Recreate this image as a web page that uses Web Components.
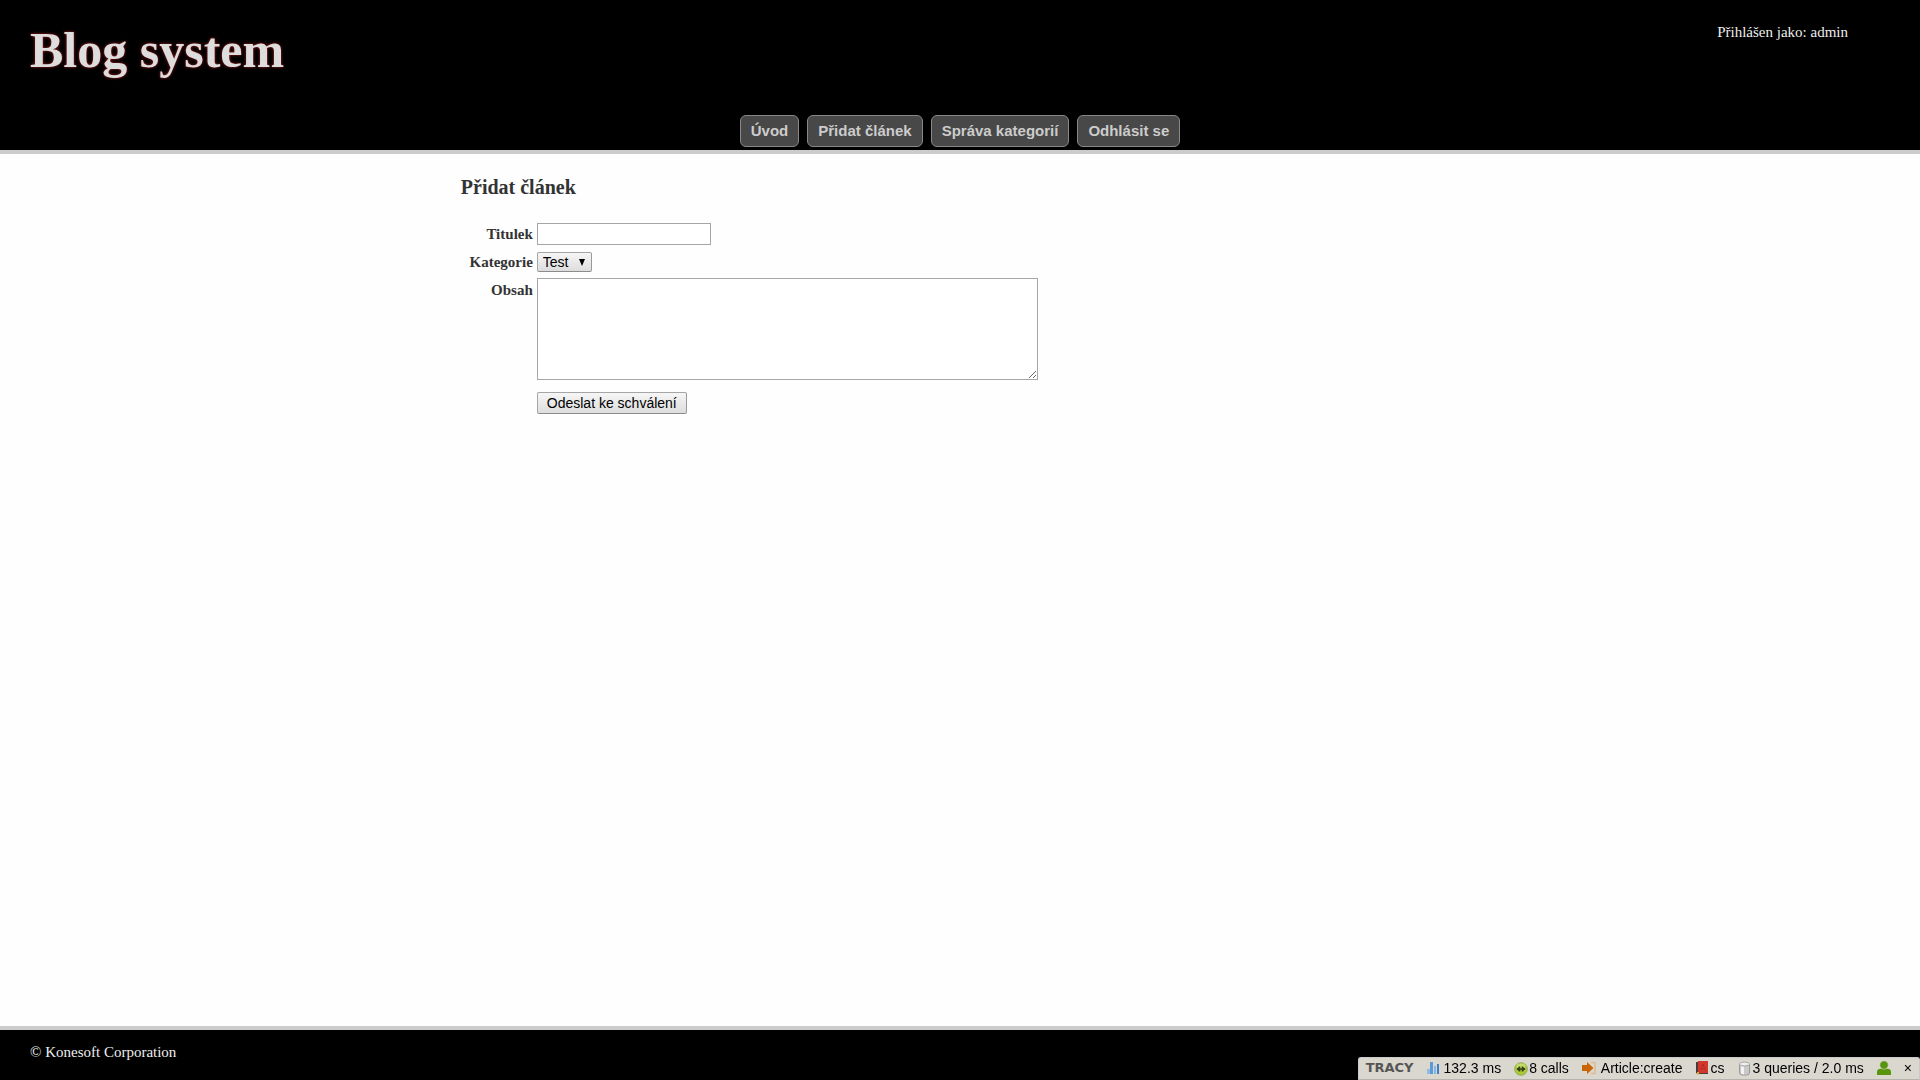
<!DOCTYPE html>
<html lang="cs">
<head>
<meta charset="utf-8">
<title>Blog system</title>
<style>
    body {
        background-color: #fefefe;
        color: #333;
        font-family: "Liberation Serif", "Times New Roman", serif;
        font-size: 15px;
        margin: 0;
    }
</style>
</head>
<body>
<blog-app></blog-app>

<script>
function createTemplate(html) {
    const template = document.createElement('template');
    template.innerHTML = html;
    return template;
}

class BaseElement extends HTMLElement {
    constructor() {
        super();
        this._shadowRoot = this.attachShadow({ mode: 'open' });
        this._shadowRoot.appendChild(this.constructor.template.content.cloneNode(true));
    }
}

class NavLink extends BaseElement {
    connectedCallback() {
        this._shadowRoot.querySelector('a').href = this.getAttribute('href') || '#';
    }
}

NavLink.template = createTemplate(`
<style>
    :host {
        display: block;
    }

    a {
        background-color: #484848;
        border: 1px solid #888;
        border-radius: 6px;
        color: #ccc;
        display: block;
        font: bold 15px/20px "Liberation Sans", Arial, sans-serif;
        padding: 5px 10px;
        text-decoration: none;
    }

    a:hover {
        background-color: #666;
    }
</style>

<a><slot></slot></a>
`);

class BlogHeader extends BaseElement {}

BlogHeader.template = createTemplate(`
<style>
    :host {
        background-color: #000;
        border-bottom: 4px solid #ccc;
        color: #eee;
        display: flex;
        flex-direction: column;
        justify-content: space-between;
        min-height: 150px;
    }

    .top {
        align-items: flex-start;
        display: flex;
        justify-content: space-between;
        padding: 22px 72px 0 30px;
    }

    h1 {
        color: #ddd;
        font-size: 50px;
        line-height: 56px;
        margin: 0;
        text-shadow: 0 0 3px #b22;
    }

    .user {
        line-height: 20px;
    }

    nav {
        display: flex;
        gap: 8px;
        justify-content: center;
        padding-bottom: 3px;
    }
</style>

<div class="top">
    <h1><slot name="title"></slot></h1>
    <div class="user"><slot name="user"></slot></div>
</div>
<nav><slot></slot></nav>
`);

class FormRow extends BaseElement {}

FormRow.template = createTemplate(`
<style>
    :host {
        column-gap: 4px;
        display: grid;
        grid-template-columns: 72px 1fr;
        min-height: 24px;
    }

    .label {
        font-weight: bold;
        line-height: 24px;
        text-align: right;
    }

    .control {
        align-items: center;
        display: flex;
    }
</style>

<div class="label"><slot name="label"></slot></div>
<div class="control"><slot></slot></div>
`);

class ArticleForm extends BaseElement {
    constructor() {
        super();
        this.$form = this._shadowRoot.querySelector('form');
        this.$form.addEventListener('submit', this._onSubmit.bind(this));
    }

    _onSubmit(e) {
        e.preventDefault();
        this.dispatchEvent(new CustomEvent('onCreate', {
            detail: Object.fromEntries(new FormData(this.$form)),
        }));
    }
}

ArticleForm.template = createTemplate(`
<style>
    :host {
        display: block;
    }

    form {
        display: flex;
        flex-direction: column;
        gap: 4px;
    }

    input, select, textarea, button {
        border: 1px solid #a6a6a6;
        box-sizing: border-box;
        color: #000;
        font: 14px/16px "Liberation Sans", Arial, sans-serif;
        margin: 0;
    }

    input, textarea {
        background-color: #fff;
        padding: 2px;
    }

    input {
        height: 22px;
        width: 174px;
    }

    textarea {
        height: 102px;
        resize: both;
        width: 501px;
    }

    select, button {
        background: linear-gradient(#f6f6f6, #ddd);
        border-color: #a6a6a6 #999 #8c8c8c #a6a6a6;
        border-radius: 2px;
    }

    select {
        appearance: none;
        padding: 1px 22px 1px 5px;
    }

    .select {
        align-items: center;
        display: grid;
    }

    .select > * {
        grid-area: 1 / 1;
    }

    .select svg {
        justify-self: end;
        margin-right: 7px;
        pointer-events: none;
    }

    button {
        height: 22px;
        padding: 1px 9px;
    }

    .submit {
        padding-top: 7px;
    }
</style>

<form>
    <form-row>
        <label slot="label" for="title">Titulek</label>
        <input type="text" id="title" name="title">
    </form-row>
    <form-row>
        <label slot="label" for="category">Kategorie</label>
        <span class="select">
            <select id="category" name="category"><option>Test</option></select>
            <svg width="6" height="7"><path d="M0 0h6L3 7z"/></svg>
        </span>
    </form-row>
    <form-row>
        <label slot="label" for="content">Obsah</label>
        <textarea id="content" name="content"></textarea>
    </form-row>
    <form-row class="submit">
        <button type="submit">Odeslat ke schválení</button>
    </form-row>
</form>
`);

class BlogFooter extends BaseElement {}

BlogFooter.template = createTemplate(`
<style>
    :host {
        background-color: #000;
        border-top: 4px solid #ccc;
        color: #eee;
        display: block;
        line-height: 20px;
        padding: 12px 30px 18px;
    }
</style>

<slot></slot>
`);

class DebugPanel extends BaseElement {}

DebugPanel.template = createTemplate(`
<style>
    :host {
        align-items: center;
        display: flex;
    }

    ::slotted(svg) {
        flex: none;
    }
</style>

<slot></slot>
`);

class DebugBar extends BaseElement {
    constructor() {
        super();
        this._shadowRoot
            .querySelector('button')
            .addEventListener('click', () => this.remove());
    }
}

DebugBar.template = createTemplate(`
<style>
    :host {
        align-items: center;
        background-color: #dad7cf;
        border: 1px solid #c9c9c9;
        border-bottom-color: #b5b3ad;
        border-radius: 3px 3px 0 0;
        bottom: 0;
        box-sizing: border-box;
        color: #000;
        display: flex;
        font: 14px/20px "Liberation Sans", Arial, sans-serif;
        gap: 13px;
        height: 23px;
        padding: 0 7px 1px;
        position: fixed;
        right: 0;
        white-space: nowrap;
    }

    .logo {
        color: #555;
        font: bold 13px/20px "DejaVu Sans", sans-serif;
    }

    button {
        background: none;
        border: 0;
        color: #000;
        font: 14px/20px "Liberation Sans", Arial, sans-serif;
        padding: 0;
    }
</style>

<span class="logo">TRACY</span>
<debug-panel>
    <svg width="17" height="14" viewBox="0 0 17 14">
        <path fill="#8fbbe6" d="M0 8h3v5H0z"/>
        <path fill="#5b9bdc" d="M3 1h3v12H3z"/>
        <path fill="#86b4e2" d="M7 5h2v8H7z"/>
        <path fill="#3d7fc4" d="M10 3h2v10h-2z"/>
    </svg>
    132.3 ms
</debug-panel>
<debug-panel>
    <svg width="15" height="16" viewBox="0 0 15 16">
        <circle cx="7" cy="9" r="6.3" fill="#a9cb36" stroke="#8aa052" stroke-width=".8"/>
        <ellipse cx="7" cy="6" rx="4.5" ry="2.5" fill="#c4dd68"/>
        <path fill="none" stroke="#35401c" stroke-width="1.6" d="M3 9h8M5.5 6.500v5M8.500 6.500v5"/>
        <path fill="#35401c" d="M2.500 9L5 7v4zM11.500 9L9 7v4z"/>
    </svg>
    8 calls
</debug-panel>
<debug-panel>
    <svg width="19" height="14" viewBox="0 0 19 14">
        <path fill="none" stroke="#dfb98d" stroke-width="1.5" d="M9 1.500h4v11H9"/>
        <path fill="#c96506" d="M0 4h5V1l6.500 6L5 13v-3H0z"/>
    </svg>
    Article:create
</debug-panel>
<debug-panel>
    <svg width="15" height="14" viewBox="0 0 15 14">
        <path fill="#4a3a38" d="M0 1h2v11h10v1H2l-2-1z"/>
        <path fill="#d3382d" d="M2 0h10v12H2z"/>
        <path fill="none" stroke="#b52c23" d="M4.500 9.500L7 3l2.500 6.500M5.500 7.500h3"/>
        <path fill="#e0a63a" d="M1 11h2v3l-1-1-1 1z"/>
    </svg>
    cs
</debug-panel>
<debug-panel>
    <svg width="15" height="16" viewBox="0 0 15 16">
        <path fill="#c9c9c9" stroke="#999" d="M1.500 4v9c0 1.300 2.300 2.200 5 2.200s5-.9 5-2.200V4z"/>
        <path fill="#f3f3f3" d="M3 6l3 .8v7.700l-3-1z"/>
        <ellipse cx="6.500" cy="4" rx="5" ry="2" fill="#eee" stroke="#a5a5a5"/>
    </svg>
    3 queries / 2.0 ms
</debug-panel>
<debug-panel>
    <svg width="14" height="14" viewBox="0 0 14 14">
        <path fill="#58950f" d="M0 14v-3c0-2.200 1.500-3.200 3.800-3.200h6.400C12.500 7.800 14 8.800 14 11v3z"/>
        <circle cx="7" cy="4" r="4.200" fill="#58950f" stroke="#dad7cf" stroke-width=".6"/>
    </svg>
</debug-panel>
<button type="button" title="close debug bar">×</button>
`);

class BlogApp extends BaseElement {}

BlogApp.template = createTemplate(`
<style>
    :host {
        display: flex;
        flex-direction: column;
        min-height: 100vh;
    }

    main {
        box-sizing: border-box;
        flex: 1;
        margin: 0 auto;
        padding: 21px 0;
        width: 52%;
    }

    h2 {
        font-size: 20px;
        line-height: 24px;
        margin: 0 0 23px;
    }
</style>

<blog-header>
    <span slot="title">Blog system</span>
    <span slot="user">Přihlášen jako: admin</span>
    <nav-link href="#uvod">Úvod</nav-link>
    <nav-link href="#pridat">Přidat článek</nav-link>
    <nav-link href="#kategorie">Správa kategorií</nav-link>
    <nav-link href="#odhlasit">Odhlásit se</nav-link>
</blog-header>
<main>
    <h2>Přidat článek</h2>
    <article-form></article-form>
</main>
<blog-footer>© Konesoft Corporation</blog-footer>
<debug-bar></debug-bar>
`);

window.customElements.define('nav-link', NavLink);
window.customElements.define('blog-header', BlogHeader);
window.customElements.define('form-row', FormRow);
window.customElements.define('article-form', ArticleForm);
window.customElements.define('blog-footer', BlogFooter);
window.customElements.define('debug-panel', DebugPanel);
window.customElements.define('debug-bar', DebugBar);
window.customElements.define('blog-app', BlogApp);
</script>
</body>
</html>
